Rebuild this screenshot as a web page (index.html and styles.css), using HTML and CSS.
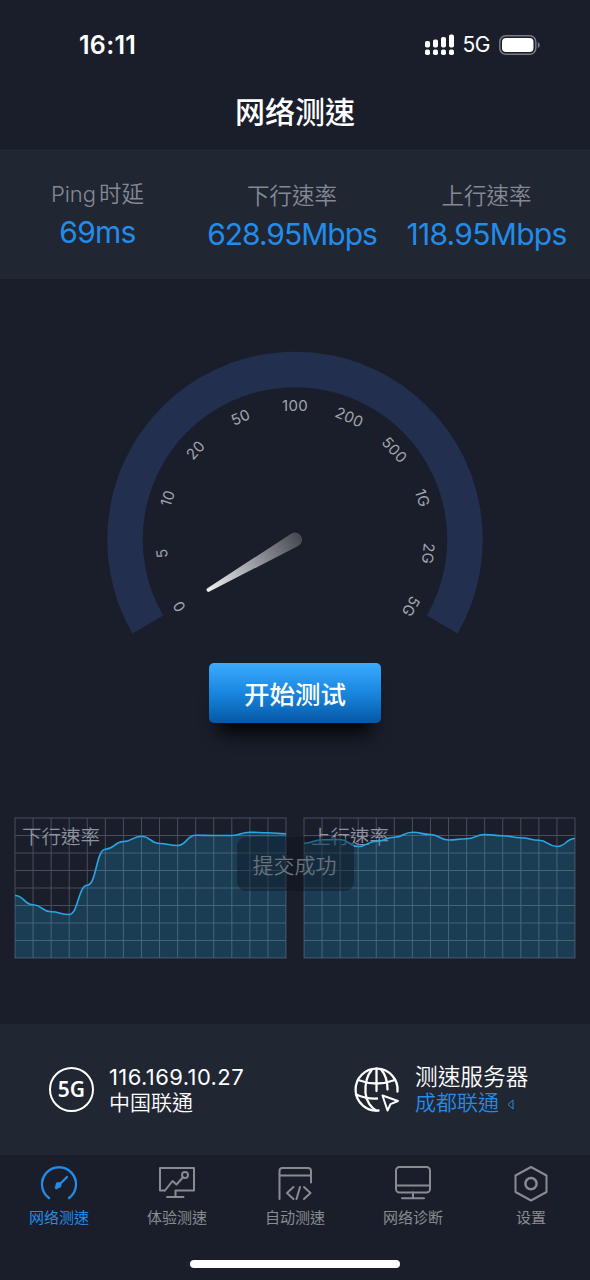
FILE: index.html
```html
<!DOCTYPE html>
<html lang="zh-HK">
<head>
<meta charset="utf-8">
<title>网络测速</title>
<link rel="stylesheet" href="styles.css">
</head>
<body>
<div class="app">
  <div class="status-bar">
    <span class="time">16:11</span>
    <div class="status-icons">
      <svg class="signal" width="30" height="22" viewBox="0 0 30 22" fill="#fff">
        <rect x="0" y="7" width="5" height="6.5" rx="1.8"/><rect x="8" y="5.500" width="5" height="8" rx="1.800"/><rect x="16" y="3" width="5" height="10.500" rx="1.800"/><rect x="24" y="0.500" width="5" height="13" rx="1.800"/>
        <rect x="0" y="15.500" width="5" height="5.500" rx="1.800"/><rect x="8" y="15.500" width="5" height="5.500" rx="1.800"/><rect x="16" y="15.500" width="5" height="5.500" rx="1.800"/><rect x="24" y="15.500" width="5" height="5.500" rx="1.800"/>
      </svg>
      <span class="network">5G</span>
      <svg class="battery" width="42" height="20" viewBox="0 0 42 20">
        <rect x="0.800" y="0.800" width="36" height="18.400" rx="6" fill="none" stroke="#777b86" stroke-width="1.500"/>
        <rect x="3" y="3" width="31.500" height="14" rx="4" fill="#fff"/>
        <path d="M38.800 7v6.200q2-1 2-3.100t-2-3.100z" fill="#777b86"/>
      </svg>
    </div>
  </div>
  <h1 class="title">网络测速</h1>
  <section class="stats">
    <div class="stat stat-ping"><span class="stat-label"><span class="latin">Ping</span>时延</span><span class="stat-value">69ms</span></div>
    <div class="stat stat-down"><span class="stat-label">下行速率</span><span class="stat-value value-down">628.95Mbps</span></div>
    <div class="stat stat-up"><span class="stat-label">上行速率</span><span class="stat-value">118.95Mbps</span></div>
  </section>
  <section class="gauge">
    <svg class="dial" width="390" height="300" viewBox="-195 -195.500 390 300">
      <defs>
        <linearGradient id="needle" gradientUnits="userSpaceOnUse" x1="-88" y1="51" x2="6" y2="-3">
          <stop offset="0" stop-color="#eeeef3"/><stop offset="0.450" stop-color="#a4a4ab"/><stop offset="1" stop-color="#45474f"/>
        </linearGradient>
      </defs>
      <path d="M-147.220 85A170 170 0 1 1 147.220 85" fill="none" stroke="#222f4f" stroke-width="35.500"/>
      <g class="ticks">
        <text transform="rotate(-120)" y="-128.500">0</text>
        <text transform="rotate(-96)" y="-128.500">5</text>
        <text transform="rotate(-72)" y="-128.500">10</text>
        <text transform="rotate(-48)" y="-128.500">20</text>
        <text transform="rotate(-24)" y="-128.500">50</text>
        <text y="-128.500">100</text>
        <text transform="rotate(24)" y="-128.500">200</text>
        <text transform="rotate(48)" y="-128.500">500</text>
        <text transform="rotate(72)" y="-128.500">1G</text>
        <text transform="rotate(96)" y="-128.500">2G</text>
        <text transform="rotate(120)" y="-128.500">5G</text>
      </g>
      <path d="M-3.500 -6L-88 49Q-89.500 51.500 -86.500 52.500L3.500 6.300A7 7 0 1 0 -3.500 -6z" fill="url(#needle)"/>
    </svg>
    <button class="start">开始测试</button>
  </section>
  <section class="charts">
    <div class="chart">
      <span class="chart-label">下行速率</span>
      <svg class="plot" width="271" height="140" viewBox="0 0 270 140" preserveAspectRatio="none">
        <path class="area" d="M0 77.500C9 77.500 9 86.800 18 86.800S27 93.800 36 93.800S45 96.500 54 96.500S63 67.200 72 67.200S81 31.200 90 31.200S99 23.500 108 23.500S117 18.200 126 18.200S135 25.500 144 25.500S153 27.500 162 27.500S171 17.200 180 17.200S189 17.500 198 17.500S207 17.500 216 17.500S225 14.200 234 14.200S243 14.800 252 14.800S261 15.800 270 15.800V140H0z"/>
        <path class="grid" d="M0 0H270V140H0zM18 0V140M36 0V140M54 0V140M72 0V140M90 0V140M108 0V140M126 0V140M144 0V140M162 0V140M180 0V140M198 0V140M216 0V140M234 0V140M252 0V140M0 17.500H270M0 35H270M0 52.500H270M0 70H270M0 87.500H270M0 105H270M0 122.500H270"/>
        <path class="line" d="M0 77.500C9 77.500 9 86.800 18 86.800S27 93.800 36 93.800S45 96.500 54 96.500S63 67.200 72 67.200S81 31.200 90 31.200S99 23.500 108 23.500S117 18.200 126 18.200S135 25.500 144 25.500S153 27.500 162 27.500S171 17.200 180 17.200S189 17.500 198 17.500S207 17.500 216 17.500S225 14.200 234 14.200S243 14.800 252 14.800S261 15.800 270 15.800"/>
      </svg>
    </div>
    <div class="chart">
      <span class="chart-label">上行速率</span>
      <svg class="plot" width="271" height="140" viewBox="0 0 270 140" preserveAspectRatio="none">
        <path class="area" d="M0 25.200C9 25.200 9 21.800 18 21.800S27 21.500 36 21.500S45 28.500 54 28.500S63 23.200 72 23.200S81 19.200 90 19.200S99 14.200 108 14.200S117 16.500 126 16.500S135 22 144 22S153 20.800 162 20.800S171 16.500 180 16.500S189 17.800 198 17.800S207 19.800 216 19.800S225 22.200 234 22.200S243 28.500 252 28.500S261 20.500 270 20.500V140H0z"/>
        <path class="grid" d="M0 0H270V140H0zM18 0V140M36 0V140M54 0V140M72 0V140M90 0V140M108 0V140M126 0V140M144 0V140M162 0V140M180 0V140M198 0V140M216 0V140M234 0V140M252 0V140M0 17.500H270M0 35H270M0 52.500H270M0 70H270M0 87.500H270M0 105H270M0 122.500H270"/>
        <path class="line" d="M0 25.200C9 25.200 9 21.800 18 21.800S27 21.500 36 21.500S45 28.500 54 28.500S63 23.200 72 23.200S81 19.200 90 19.200S99 14.200 108 14.200S117 16.500 126 16.500S135 22 144 22S153 20.800 162 20.800S171 16.500 180 16.500S189 17.800 198 17.800S207 19.800 216 19.800S225 22.200 234 22.200S243 28.500 252 28.500S261 20.500 270 20.500"/>
      </svg>
    </div>
    <div class="toast">提交成功</div>
  </section>
  <section class="info">
    <div class="info-item">
      <div class="badge">5G</div>
      <div class="info-text"><span class="ip">116.169.10.27</span><span class="isp">中国联通</span></div>
    </div>
    <div class="info-item info-server">
      <svg class="globe" width="46" height="46" viewBox="0 0 46 46" fill="none" stroke="#fff" stroke-width="2.300" stroke-linecap="round">
        <path d="M43.500 24.500A21 21 0 1 0 24.500 43.500"/>
        <path d="M18 2.500C12.500 9 11 18 11.500 26S17 40.500 22 43.500M27 2.500C32 8 33.500 15 33.500 22.500"/>
        <path d="M22.500 1.500V24M4 13Q22.500 20 41 13M2 27.500Q12 32 23 31.500"/>
        <path d="M28.500 28.500L44 34L36.500 37.200L33.500 43.500z" stroke-linejoin="round" stroke-width="2"/>
      </svg>
      <div class="info-text"><span class="server-title">测速服务器</span><span class="server">成都联通<svg class="caret" width="7" height="11" viewBox="0 0 7 11" fill="none" stroke="#238ce8"><path d="M6 1L1 5.500L6 10z"/></svg></span></div>
    </div>
  </section>
  <nav class="tabs">
    <a class="tab active">
      <svg width="40" height="38" viewBox="0 0 40 38" fill="none" stroke="currentColor" stroke-width="2.300" stroke-linecap="round"><path d="M10 33A17 17 0 1 1 30 33"/><path d="M19 21L28 12"/><circle cx="19.500" cy="20" r="3" fill="currentColor" stroke="none"/><path d="M17.500 22.500L20 20" stroke-width="3.500"/></svg>
      <span>网络测速</span>
    </a>
    <a class="tab">
      <svg width="40" height="38" viewBox="0 0 40 38" fill="none" stroke="currentColor" stroke-width="2" stroke-linejoin="round" stroke-linecap="round"><path d="M8 25.500H3V3H37V25.500H18.500V32M10 32H26.500"/><path d="M8 25.500L15.500 16L19.500 19.500L25.800 12.500"/><circle cx="28" cy="10" r="3"/></svg>
      <span>体验测速</span>
    </a>
    <a class="tab">
      <svg width="40" height="38" viewBox="0 0 40 38" fill="none" stroke="currentColor" stroke-width="2" stroke-linejoin="round" stroke-linecap="round"><path d="M4.500 34V6Q4.500 3 7.500 3H33Q36 3 36 6V17.500M4.500 10.500H36"/><path d="M18.500 22L12 28L18.500 34M25 22L21.500 34M29 22L35.500 28L29 34"/></svg>
      <span>自动测速</span>
    </a>
    <a class="tab">
      <svg width="40" height="38" viewBox="0 0 40 38" fill="none" stroke="currentColor" stroke-width="2" stroke-linecap="round"><rect x="3" y="2" width="34" height="25.500" rx="3.500"/><path d="M3 20.500H37M20 27.500V33M9 33.200H31"/></svg>
      <span>网络诊断</span>
    </a>
    <a class="tab">
      <svg width="40" height="38" viewBox="0 0 40 38" fill="none" stroke="currentColor" stroke-width="2" stroke-linejoin="round"><path d="M20 2L35.500 10.500V27L20 35.500L4.500 27V10.500z"/><circle cx="20" cy="18.700" r="5.600" stroke-width="2.500"/></svg>
      <span>设置</span>
    </a>
  </nav>
  <div class="home-bar"></div>
</div>
</body>
</html>
```
FILE: styles.css
```css
* { box-sizing: border-box; }
body { margin: 0; background: #1a1e2b; font-family: Inter, "Noto Sans CJK TC", sans-serif; color: #fff; }
.app { width: 590px; height: 1280px; display: flex; flex-direction: column; overflow: hidden; }
.status-bar { height: 75px; flex: none; padding: 14px 49px 0 79px; display: flex; justify-content: space-between; align-items: center; }
.time { font-size: 25px; font-weight: 600; letter-spacing: 0.300px; }
.status-icons { display: flex; align-items: center; }
.network { font-size: 21px; margin: 0 9px 0 8px; letter-spacing: -0.500px; }
.title { margin: 0; height: 73px; line-height: 74px; text-align: center; font-size: 30px; font-weight: 500; }
.stats { height: 131px; flex: none; background: #212633; border-top: 1px solid #171b26; display: grid; grid-template-columns: 195px 194px 195px; }
.stat { display: flex; flex-direction: column; align-items: center; padding-top: 30px; white-space: nowrap; }
.stat-ping { padding-top: 28px; }
.stat-label { font-size: 22.500px; line-height: 34px; color: #858995; font-weight: 350; }
.latin { font-size: 22px; margin-right: 3px; }
.stat-value { font-size: 30px; line-height: 42px; color: #238ce8; letter-spacing: -0.700px; }
.value-down { letter-spacing: -1px; }
.gauge { height: 538px; flex: none; display: flex; flex-direction: column; align-items: center; padding-top: 65px; }
.dial { flex: none; }
.ticks text { font-size: 15px; fill: #a2a5ad; text-anchor: middle; letter-spacing: 0.300px; }
.start { margin: 19px 0 0; width: 172px; height: 60px; border: 0; border-radius: 5px; background: linear-gradient(#3babff, #1986df 50%, #0558a5); box-shadow: 0 20px 18px -10px #030406; color: #fff; font: 500 25.500px/60px "Noto Sans CJK TC", sans-serif; padding: 0; }
.charts { position: relative; height: 207px; flex: none; padding: 0 15px; display: flex; justify-content: space-between; align-items: flex-start; }
.chart { width: 271px; height: 141px; display: grid; }
.chart > * { grid-area: 1 / 1; }
.chart-label { padding: 4px 0 0 7px; font-size: 19.500px; line-height: 33px; font-weight: 350; color: #8d929e; }
.plot { margin-top: 0.500px; overflow: visible; }
.area { fill: rgba(29, 137, 180, 0.300); }
.grid { fill: none; stroke: rgba(175, 190, 205, 0.300); stroke-width: 1; }
.line { fill: none; stroke: #2aa5e5; stroke-width: 1.600; }
.toast { position: absolute; left: 237px; top: 20px; width: 117px; height: 54px; border-radius: 9px; background: rgba(10, 15, 24, 0.380); color: #69717e; font-size: 21px; font-weight: 350; line-height: 57px; text-align: center; padding-right: 2px; }
.info { height: 131px; flex: none; background: #212633; display: grid; grid-template-columns: 305px 1fr; align-items: center; }
.info-item { display: flex; align-items: center; padding-left: 49px; }
.badge { width: 45px; height: 45px; border: 2px solid #fff; border-radius: 50%; text-align: center; font: 600 21px/41px "Noto Sans", sans-serif; }
.info-text { display: flex; flex-direction: column; margin-left: 15px; line-height: 26px; white-space: nowrap; }
.ip { font-size: 22px; letter-spacing: 0.400px; }
.isp { font-size: 21px; font-weight: 350; }
.server-title { font-size: 22.700px; font-weight: 350; }
.server { color: #238ce8; font-size: 21px; font-weight: 350; }
.caret { margin-left: 8px; }
.tabs { height: 85px; flex: none; display: grid; grid-template-columns: repeat(5, 1fr); padding-top: 10px; }
.tab { display: flex; flex-direction: column; align-items: center; color: #8a8b90; font-size: 15px; line-height: 22px; }
.tab span { margin-top: 4px; }
.tab.active { color: #238ce8; }
.home-bar { width: 210px; height: 8px; margin: 20px auto 0; border-radius: 4px; background: #fff; }
```
